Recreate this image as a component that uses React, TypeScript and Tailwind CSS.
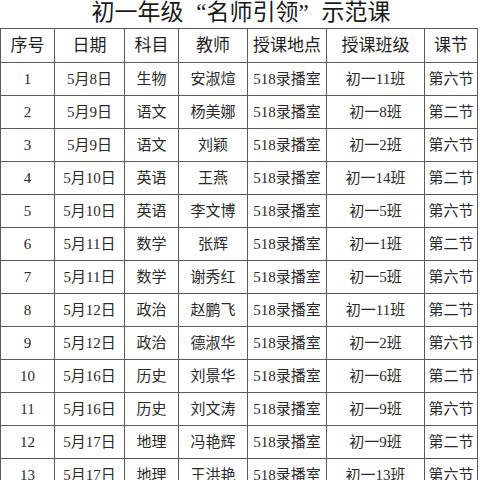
const rows = [
  ["1", "5月8日", "生物", "安淑煊", "518录播室", "初一11班", "第六节"],
  ["2", "5月9日", "语文", "杨美娜", "518录播室", "初一8班", "第二节"],
  ["3", "5月9日", "语文", "刘颖", "518录播室", "初一2班", "第六节"],
  ["4", "5月10日", "英语", "王燕", "518录播室", "初一14班", "第二节"],
  ["5", "5月10日", "英语", "李文博", "518录播室", "初一5班", "第六节"],
  ["6", "5月11日", "数学", "张辉", "518录播室", "初一1班", "第二节"],
  ["7", "5月11日", "数学", "谢秀红", "518录播室", "初一5班", "第六节"],
  ["8", "5月12日", "政治", "赵鹏飞", "518录播室", "初一11班", "第二节"],
  ["9", "5月12日", "政治", "德淑华", "518录播室", "初一2班", "第六节"],
  ["10", "5月16日", "历史", "刘景华", "518录播室", "初一6班", "第二节"],
  ["11", "5月16日", "历史", "刘文涛", "518录播室", "初一9班", "第六节"],
  ["12", "5月17日", "地理", "冯艳辉", "518录播室", "初一9班", "第二节"],
  ["13", "5月17日", "地理", "王洪艳", "518录播室", "初一13班", "第六节"],
];

const headers = ["序号", "日期", "科目", "教师", "授课地点", "授课班级", "课节"];
const widths = ["w-[54px]", "w-[70px]", "w-[54px]", "w-[69px]", "w-[79px]", "w-[98px]", "w-[53px]"];

export default function App() {
  return (
    <div className="w-[480px] h-[480px] overflow-hidden bg-white font-['Liberation_Serif','Noto_Sans_CJK_SC',serif] text-[#2a2a2a]">
      <h1 className="h-[28px] pl-[2px] text-center text-[23px] leading-[26px] font-normal text-[#1a1a1a]">
        初一年级
        <span className="inline-block w-[23px] text-right">“</span>
        名师引领
        <span className="inline-block w-[23px] text-left">”</span>
        示范课
      </h1>
      <table className="w-[477px] table-fixed border-collapse">
        <colgroup>
          {widths.map((w, i) => (
            <col key={i} className={w} />
          ))}
        </colgroup>
        <thead>
          <tr className="h-[34px]">
            {headers.map((h) => (
              <th
                key={h}
                className="border border-[#5a5a5a] p-0 text-center text-[17px] font-normal text-[#1f1f1f]"
              >
                {h}
              </th>
            ))}
          </tr>
        </thead>
        <tbody>
          {rows.map((r) => (
            <tr key={r[0]} className="h-[33px]">
              {r.map((c, i) => (
                <td
                  key={i}
                  className="border border-[#5a5a5a] p-0 text-center text-[15px] whitespace-nowrap"
                >
                  {c}
                </td>
              ))}
            </tr>
          ))}
        </tbody>
      </table>
    </div>
  );
}
